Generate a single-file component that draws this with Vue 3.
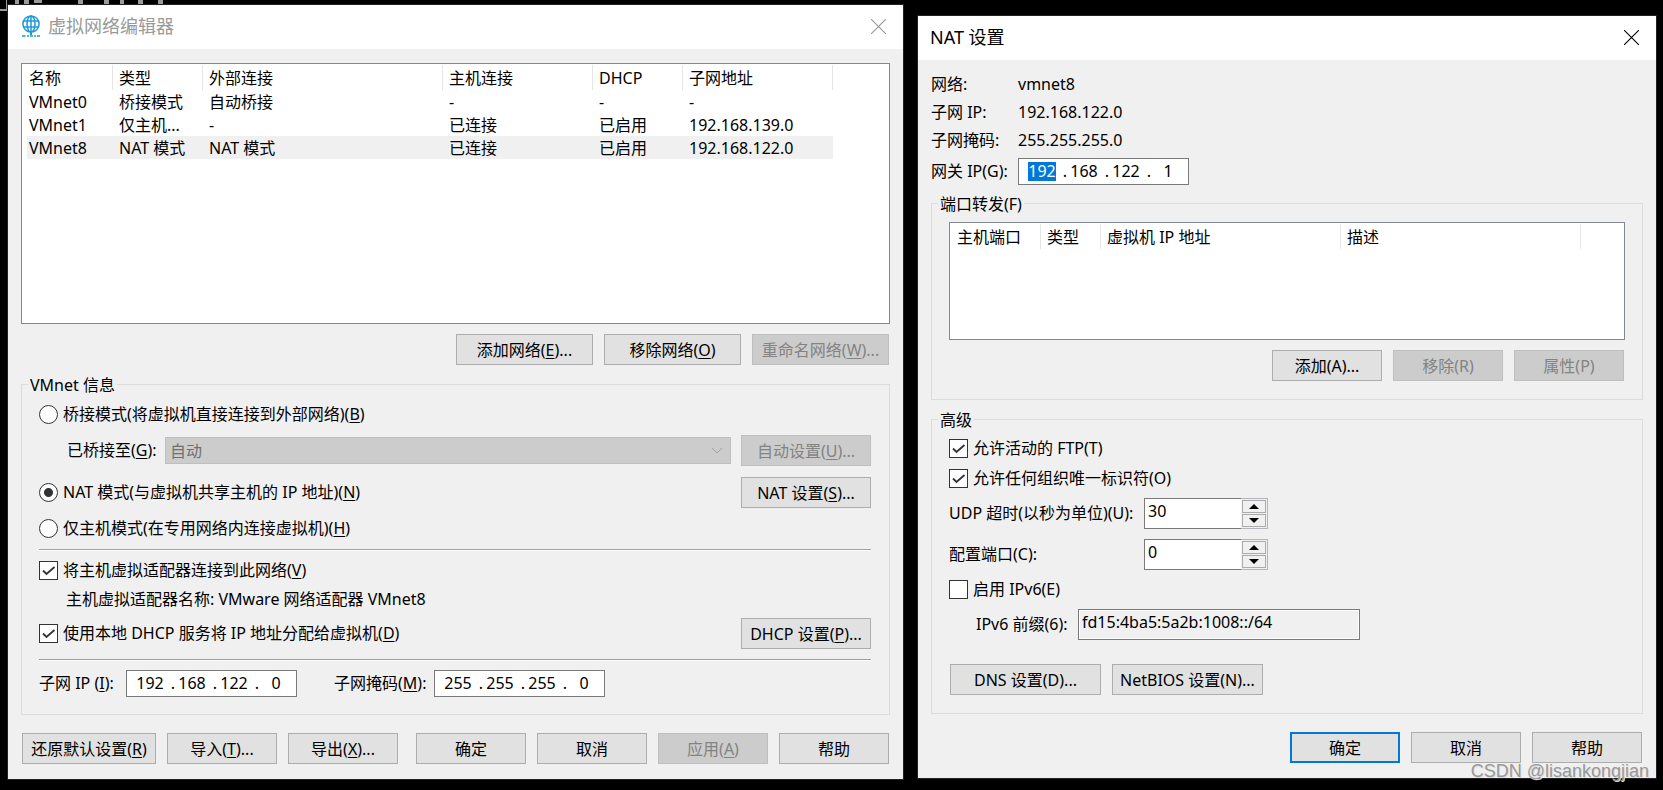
<script setup>
import { ref } from 'vue'

const networkColumns = ['名称', '类型', '外部连接', '主机连接', 'DHCP', '子网地址']
const networks = [
  ['VMnet0', '桥接模式', '自动桥接', '-', '-', '-'],
  ['VMnet1', '仅主机...', '-', '已连接', '已启用', '192.168.139.0'],
  ['VMnet8', 'NAT 模式', 'NAT 模式', '已连接', '已启用', '192.168.122.0']
]
const selectedRow = ref(2)
const forwardColumns = ['主机端口', '类型', '虚拟机 IP 地址', '描述']

const mode = ref('nat')
const connectHost = ref(true)
const useDhcp = ref(true)
const subnetIp = ref(['192', '168', '122', '0'])
const subnetMask = ref(['255', '255', '255', '0'])
const gateway = ref(['192', '168', '122', '1'])

const allowFtp = ref(true)
const allowOui = ref(true)
const enableIpv6 = ref(false)
const udpTimeout = ref(30)
const configPort = ref(0)
const ipv6Prefix = ref('fd15:4ba5:5a2b:1008::/64')
</script>

<template>
  <main class="desktop">
    <svg class="backdrop" width="170" height="12" viewBox="0 0 170 12" aria-hidden="true">
      <g fill="#9a9a9a">
        <rect x="0" y="9" width="7" height="2" />
        <rect x="6" y="0" width="1" height="9" />
        <rect x="15" y="0" width="4" height="4" />
        <rect x="24" y="0" width="5" height="4" />
        <rect x="34" y="0" width="8" height="3" />
        <rect x="78" y="0" width="5" height="4" />
        <rect x="104" y="0" width="5" height="4" />
        <rect x="120" y="0" width="4" height="4" />
        <rect x="138" y="0" width="5" height="4" />
        <rect x="158" y="0" width="5" height="4" />
      </g>
    </svg>

    <section class="window editor" aria-label="虚拟网络编辑器">
      <header class="titlebar inactive">
        <svg class="app-icon" width="18" height="22" viewBox="0 0 18 22" aria-hidden="true">
          <g fill="none" stroke="#1b9ad7" stroke-width="1.5">
            <circle cx="9" cy="9" r="8.1" />
            <ellipse cx="9" cy="9" rx="4" ry="8.1" />
            <path d="M9 1v16M1.500 6h15M1.500 12h15" />
          </g>
          <path d="M9 17v3" stroke="#1b9ad7" stroke-width="2" />
          <path d="M0 21h3.500M5 21h2M8 21h3M12 21h2M15 21h3" stroke="#20a89c" stroke-width="1.500" />
        </svg>
        <h1>虚拟网络编辑器</h1>
        <button class="close" type="button" aria-label="关闭">
          <svg width="15" height="15" viewBox="0 0 15 15"><path d="M0 0l15 15M15 0L0 15" stroke="currentColor" stroke-width="1.100" /></svg>
        </button>
      </header>

      <div class="body">
        <div class="list networks">
          <table>
            <colgroup><col class="w-first" /><col class="w-s" /><col class="w-l" /><col class="w-m" /><col class="w-s" /><col class="w-m" /></colgroup>
            <thead>
              <tr><th v-for="c in networkColumns" :key="c" scope="col">{{ c }}</th></tr>
            </thead>
            <tbody>
              <tr v-for="(row, i) in networks" :key="row[0]" :class="{ selected: i === selectedRow }" @click="selectedRow = i">
                <td v-for="(cell, j) in row" :key="j">{{ cell }}</td>
              </tr>
            </tbody>
          </table>
        </div>
        <div class="buttons list-buttons">
          <button class="btn wide" type="button">添加网络(<u>E</u>)...</button>
          <button class="btn wide" type="button">移除网络(<u>O</u>)</button>
          <button class="btn wide" type="button" disabled>重命名网络(<u>W</u>)...</button>
        </div>

        <fieldset class="group">
          <legend>VMnet 信息</legend>
          <div class="modes">
            <label class="option tall"><input v-model="mode" type="radio" name="mode" value="bridged" />桥接模式(将虚拟机直接连接到外部网络)(<u>B</u>)</label>
            <div class="row bridge">
              <label for="bridged-to">已桥接至(<u>G</u>):</label>
              <div class="combo">
                <select id="bridged-to" disabled><option>自动</option></select>
                <svg width="12" height="7" viewBox="0 0 12 7" aria-hidden="true"><path d="M1 1l5 5 5-5" fill="none" stroke="#a0a0a0" /></svg>
              </div>
              <button class="btn side" type="button" disabled>自动设置(<u>U</u>)...</button>
            </div>
            <div class="row">
              <label class="option"><input v-model="mode" type="radio" name="mode" value="nat" />NAT 模式(与虚拟机共享主机的 IP 地址)(<u>N</u>)</label>
              <button class="btn side" type="button">NAT 设置(<u>S</u>)...</button>
            </div>
            <label class="option"><input v-model="mode" type="radio" name="mode" value="host" />仅主机模式(在专用网络内连接虚拟机)(<u>H</u>)</label>
          </div>
          <hr />
          <div class="adapter">
            <label class="option">
              <span class="check"><input v-model="connectHost" type="checkbox" /><svg v-if="connectHost" viewBox="0 0 19 19" aria-hidden="true"><path d="M4 9.500l3.500 3.500 8-7" /></svg></span>将主机虚拟适配器连接到此网络(<u>V</u>)
            </label>
            <p class="adapter-name">主机虚拟适配器名称: VMware 网络适配器 VMnet8</p>
            <div class="row">
              <label class="option">
                <span class="check"><input v-model="useDhcp" type="checkbox" /><svg v-if="useDhcp" viewBox="0 0 19 19" aria-hidden="true"><path d="M4 9.500l3.500 3.500 8-7" /></svg></span>使用本地 DHCP 服务将 IP 地址分配给虚拟机(<u>D</u>)
              </label>
              <button class="btn side" type="button">DHCP 设置(<u>P</u>)...</button>
            </div>
          </div>
          <hr />
          <div class="subnet">
            <label for="subnet-ip">子网 IP (<u>I</u>):</label>
            <div class="ip">
              <template v-for="(o, i) in subnetIp" :key="i">
                <input :id="i === 0 ? 'subnet-ip' : undefined" v-model="subnetIp[i]" type="text" maxlength="3" :aria-label="'子网 IP ' + (i + 1)" /><span v-if="i < 3">.</span>
              </template>
            </div>
            <label class="mask-label" for="subnet-mask">子网掩码(<u>M</u>):</label>
            <div class="ip">
              <template v-for="(o, i) in subnetMask" :key="i">
                <input :id="i === 0 ? 'subnet-mask' : undefined" v-model="subnetMask[i]" type="text" maxlength="3" :aria-label="'子网掩码 ' + (i + 1)" /><span v-if="i < 3">.</span>
              </template>
            </div>
          </div>
        </fieldset>

        <footer class="buttons footer">
          <button class="btn restore" type="button">还原默认设置(<u>R</u>)</button>
          <button class="btn" type="button">导入(<u>T</u>)...</button>
          <button class="btn" type="button">导出(<u>X</u>)...</button>
          <button class="btn push" type="button">确定</button>
          <button class="btn" type="button">取消</button>
          <button class="btn" type="button" disabled>应用(<u>A</u>)</button>
          <button class="btn" type="button">帮助</button>
        </footer>
      </div>
    </section>

    <section class="window nat" aria-label="NAT 设置">
      <header class="titlebar">
        <h1>NAT 设置</h1>
        <button class="close" type="button" aria-label="关闭">
          <svg width="15" height="15" viewBox="0 0 15 15"><path d="M0 0l15 15M15 0L0 15" stroke="currentColor" stroke-width="1.100" /></svg>
        </button>
      </header>

      <div class="body">
        <dl class="info">
          <dt>网络:</dt><dd>vmnet8</dd>
          <dt>子网 IP:</dt><dd>192.168.122.0</dd>
          <dt>子网掩码:</dt><dd>255.255.255.0</dd>
        </dl>
        <div class="gateway">
          <label for="gateway-ip">网关 IP(G):</label>
          <div class="ip">
            <template v-for="(o, i) in gateway" :key="i">
              <input :id="i === 0 ? 'gateway-ip' : undefined" v-model="gateway[i]" :class="{ highlighted: i === 0 }" type="text" maxlength="3" :aria-label="'网关 IP ' + (i + 1)" /><span v-if="i < 3">.</span>
            </template>
          </div>
        </div>

        <fieldset class="group forwarding">
          <legend>端口转发(F)</legend>
          <div class="list ports">
            <table>
              <colgroup><col class="w-first" /><col class="w-xs" /><col class="w-l" /><col class="w-l" /></colgroup>
              <thead>
                <tr><th v-for="c in forwardColumns" :key="c" scope="col">{{ c }}</th></tr>
              </thead>
            </table>
          </div>
          <div class="buttons list-buttons">
            <button class="btn" type="button">添加(A)...</button>
            <button class="btn" type="button" disabled>移除(R)</button>
            <button class="btn" type="button" disabled>属性(P)</button>
          </div>
        </fieldset>

        <fieldset class="group advanced">
          <legend>高级</legend>
          <div class="settings">
            <label class="option">
              <span class="check"><input v-model="allowFtp" type="checkbox" /><svg v-if="allowFtp" viewBox="0 0 19 19" aria-hidden="true"><path d="M4 9.500l3.500 3.500 8-7" /></svg></span>允许活动的 FTP(T)
            </label>
            <label class="option tall">
              <span class="check"><input v-model="allowOui" type="checkbox" /><svg v-if="allowOui" viewBox="0 0 19 19" aria-hidden="true"><path d="M4 9.500l3.500 3.500 8-7" /></svg></span>允许任何组织唯一标识符(O)
            </label>
            <div class="field">
              <label for="udp">UDP 超时(以秒为单位)(U):</label>
              <div class="spin">
                <input id="udp" v-model.number="udpTimeout" type="text" inputmode="numeric" />
                <div class="spin-buttons">
                  <button type="button" aria-label="增加 UDP 超时" @click="udpTimeout++"><svg width="10" height="5" viewBox="0 0 10 5"><path d="M0 5l5-5 5 5z" /></svg></button>
                  <button type="button" aria-label="减少 UDP 超时" @click="udpTimeout--"><svg width="10" height="5" viewBox="0 0 10 5"><path d="M0 0l5 5 5-5z" /></svg></button>
                </div>
              </div>
            </div>
            <div class="field">
              <label for="port">配置端口(C):</label>
              <div class="spin">
                <input id="port" v-model.number="configPort" type="text" inputmode="numeric" />
                <div class="spin-buttons">
                  <button type="button" aria-label="增加配置端口" @click="configPort++"><svg width="10" height="5" viewBox="0 0 10 5"><path d="M0 5l5-5 5 5z" /></svg></button>
                  <button type="button" aria-label="减少配置端口" @click="configPort--"><svg width="10" height="5" viewBox="0 0 10 5"><path d="M0 0l5 5 5-5z" /></svg></button>
                </div>
              </div>
            </div>
            <label class="option">
              <span class="check"><input v-model="enableIpv6" type="checkbox" /><svg v-if="enableIpv6" viewBox="0 0 19 19" aria-hidden="true"><path d="M4 9.500l3.500 3.500 8-7" /></svg></span>启用 IPv6(E)
            </label>
            <div class="prefix">
              <label for="prefix">IPv6 前缀(6):</label>
              <input id="prefix" v-model="ipv6Prefix" type="text" readonly />
            </div>
          </div>
          <div class="buttons service-buttons">
            <button class="btn service" type="button">DNS 设置(D)...</button>
            <button class="btn service" type="button">NetBIOS 设置(N)...</button>
          </div>
        </fieldset>

        <footer class="buttons footer end">
          <button class="btn default" type="button">确定</button>
          <button class="btn" type="button">取消</button>
          <button class="btn" type="button">帮助</button>
        </footer>
      </div>
    </section>

    <span class="watermark">CSDN @lisankongjian</span>
  </main>
</template>

<style>
body {
  background: #000;
}
</style>

<style scoped>
.desktop,
.desktop * {
  box-sizing: border-box;
}
.desktop {
  position: relative;
  display: grid;
  grid-template-columns: minmax(0, 897fr) minmax(0, 740fr);
  align-items: start;
  gap: 13px;
  min-height: 100vh;
  padding: 4px 6px 10px 7px;
  background: #000;
  color: #000;
  font: 16px/19px "Noto Sans", "Noto Sans CJK SC", sans-serif;
  white-space: nowrap;
}
.backdrop {
  position: absolute;
  top: 0;
  left: 0;
}
button,
input,
select {
  margin: 0;
  padding: 0;
  font: inherit;
  color: inherit;
  border-radius: 0;
}
u {
  text-decoration-thickness: 1px;
  text-underline-offset: 2px;
}
.window {
  position: relative;
  border: 1px solid #222;
  background: #f0f0f0;
}
.nat {
  margin-top: 11px;
}
.titlebar {
  display: flex;
  align-items: center;
  gap: 8px;
  height: 44px;
  padding: 0 17px 2px 12px;
  background: #fff;
}
.titlebar.inactive {
  padding-left: 14px;
  color: #999;
}
h1 {
  margin: 0;
  font-size: 18px;
  line-height: 24px;
  font-weight: 400;
}
.close {
  display: flex;
  margin-left: auto;
  border: 0;
  background: none;
}
.body {
  padding: 0 13px 15px;
}
.list {
  padding: 1px 0 0 5px;
  border: 1px solid #828790;
  background: #fff;
  overflow: hidden;
}
.networks {
  min-height: 261px;
  margin-top: 14px;
}
.ports {
  min-height: 118px;
}
table {
  width: 1px;
  table-layout: fixed;
  border-collapse: separate;
  border-spacing: 0;
}
.w-first { width: 86px; }
.w-xs { width: 60px; }
.w-s { width: 90px; }
.w-m { width: 150px; }
.w-l { width: 240px; }
th,
td {
  height: 23px;
  padding: 2px 0 0 6px;
  text-align: left;
  font-weight: 400;
}
th {
  height: 25px;
  border-right: 1px solid #e5e5e5;
}
th:first-child,
td:first-child {
  padding-left: 2px;
}
.selected td {
  background: #f0f0f0;
}
.buttons {
  display: flex;
  gap: 11px;
  padding-right: 1px;
}
.list-buttons {
  justify-content: flex-end;
  margin-top: 10px;
}
.btn {
  width: 110px;
  height: 31px;
  padding-top: 1px;
  border: 1px solid #adadad;
  background: #e1e1e1;
}
.btn:disabled {
  border-color: #bfbfbf;
  background: #ccc;
  color: #838383;
}
.btn.wide { width: 137px; }
.btn.side { width: 130px; margin-left: auto; }
.btn.restore { width: 134px; }
.btn.service { width: 151px; }
.btn.push { margin-left: auto; }
.btn.default {
  border: 2px solid #0078d7;
}
.group {
  min-width: 0;
  margin: 9px 0 0;
  padding: 0 17px 17px;
  border: 1px solid #dcdcdc;
}
legend {
  height: 21px;
  margin-left: -11px;
  padding: 0 2px;
  line-height: 23px;
}
.modes,
.adapter,
.settings {
  display: flex;
  flex-direction: column;
}
.modes {
  gap: 11px;
  padding-top: 9px;
}
.row {
  display: flex;
  align-items: center;
  height: 31px;
  padding-right: 1px;
}
.option {
  display: flex;
  align-items: center;
  height: 19px;
}
.option.tall {
  height: 20px;
}
.option input {
  flex: none;
  width: 19px;
  height: 19px;
  appearance: none;
  border: 1px solid #333;
  background: #fff;
}
.option > input {
  margin-right: 5px;
  border-radius: 50%;
}
.option > input:checked {
  background: radial-gradient(circle, #333 4px, #fff 5px);
}
.check {
  display: grid;
  flex: none;
  margin-right: 5px;
}
.check > * {
  grid-area: 1 / 1;
}
.check svg {
  width: 19px;
  height: 19px;
  fill: none;
  stroke: #333;
  stroke-width: 1.8;
  pointer-events: none;
}
.bridge {
  gap: 10px;
  padding-left: 28px;
}
.bridge label {
  width: 88px;
}
.combo {
  display: grid;
  flex: 1;
  align-items: center;
}
.combo > * {
  grid-area: 1 / 1;
}
.combo svg {
  justify-self: end;
  margin-right: 8px;
  pointer-events: none;
}
select {
  width: 100%;
  height: 27px;
  padding: 1px 4px 0;
  appearance: none;
  border: 1px solid #bfbfbf;
  background: #ccc;
}
select:disabled {
  color: #707070;
  opacity: 1;
}
hr {
  height: 2px;
  margin: 11px 1px 10px 0;
  border: 0;
  border-top: 1px solid #a0a0a0;
  background: #fff;
}
.adapter {
  gap: 10px;
}
.adapter + hr {
  margin: 10px 1px 9px 0;
}
.adapter-name {
  height: 18px;
  margin: 0;
  padding-left: 27px;
}
.subnet {
  display: flex;
  align-items: center;
}
.subnet label {
  width: 87px;
}
.subnet .mask-label {
  width: 100px;
  margin-left: 37px;
}
.ip {
  display: flex;
  align-items: center;
  width: 171px;
  height: 27px;
  padding-left: 6px;
  border: 1px solid #7a7a7a;
  background: #fff;
}
.ip input {
  flex: none;
  width: 28px;
  height: 19px;
  margin: 0 3px;
  border: 0;
  background: #fff;
  text-align: center;
}
.ip input.highlighted {
  background: #0078d7;
  color: #fff;
}
.ip span {
  flex: none;
  width: 8px;
  text-align: right;
}
.footer {
  margin-top: 18px;
  padding-left: 1px;
}
.end {
  justify-content: flex-end;
}
.info {
  display: grid;
  grid-template-columns: 87px 1fr;
  margin: 0;
  padding-top: 10px;
  line-height: 28px;
}
dd {
  margin: 0;
}
.gateway {
  display: flex;
  align-items: center;
  margin-top: 4px;
}
.gateway label {
  width: 87px;
}
.forwarding {
  margin-top: 8px;
}
.forwarding,
.advanced {
  padding-bottom: 18px;
}
.forwarding .ports {
  margin-top: 8px;
}
.settings {
  gap: 10px;
  padding-top: 9px;
}
.field,
.prefix {
  display: flex;
  align-items: center;
}
.field label {
  width: 195px;
}
.spin {
  display: flex;
  width: 124px;
  height: 31px;
}
.spin input {
  flex: 1;
  min-width: 0;
  padding: 0 0 5px 3px;
  border: 1px solid #7a7a7a;
  border-right: 0;
  background: #fff;
}
.spin-buttons {
  display: grid;
  gap: 1px;
  width: 27px;
  padding: 1px;
  border: 1px solid #b4b4bc;
  border-left: 0;
}
.spin-buttons button {
  display: grid;
  place-items: center;
  border: 1px solid #acacac;
  background: #f0f0f0;
}
.prefix {
  padding-left: 27px;
}
.prefix label {
  width: 102px;
}
.prefix input {
  width: 282px;
  height: 31px;
  padding: 0 4px 5px 3px;
  border: 1px solid #7a7a7a;
  background: #f0f0f0;
  box-shadow: inset 0 0 0 1px #fff;
}
.service-buttons {
  margin-top: 24px;
  padding-left: 1px;
}
.watermark {
  position: absolute;
  right: 14px;
  bottom: 8px;
  color: #999;
  font: 18px/22px "Liberation Sans", sans-serif;
  text-shadow: 1px 1px 0 #ddd;
  pointer-events: none;
}
</style>
